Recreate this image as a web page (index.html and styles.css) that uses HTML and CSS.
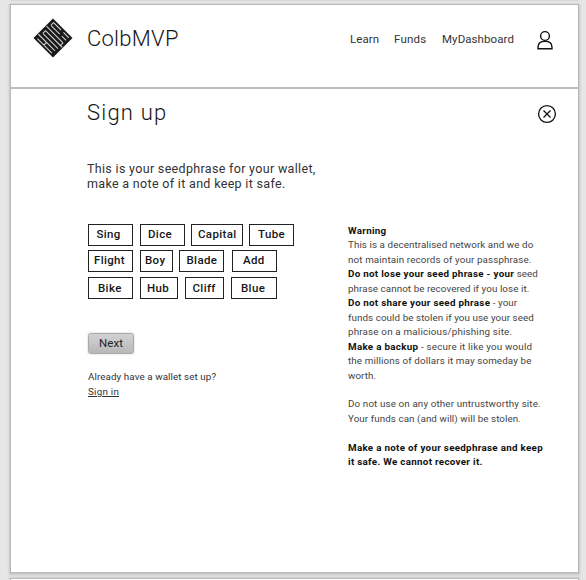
FILE: index.html
```html
<!DOCTYPE html>
<html lang="en">
<head>
<meta charset="utf-8">
<title>ColbMVP</title>
<link rel="stylesheet" href="styles.css">
</head>
<body>
<div class="previous"></div>
<div class="page">
  <header class="header">
    <svg class="logo" viewBox="0 0 40 40">
      <path d="M20 .5 39.5 20 20 39.5 .5 20Z" fill="#191919"/>
      <g transform="rotate(45 20 20)" fill="none" stroke="#cfcfcf" stroke-width="1.1">
        <path d="M9.5 8.7H20M23.5 8.7H31M9.5 12.5H22M25 12.5H31M7 16.3H30.5M9.5 20.1H33M9.5 23.9H31M7 27.7H30.5M9.5 31.5H30M9.5 8.7V12.5M30.5 16.3V20M9.5 20V23.9M18.5 27.7V31.5"/>
      </g>
    </svg>
    <div class="brand">ColbMVP</div>
    <nav class="nav">
      <a class="learn">Learn</a>
      <a class="funds">Funds</a>
      <a class="dash">MyDashboard</a>
    </nav>
    <svg class="user" viewBox="0 0 18 22" fill="none" stroke="#111" stroke-width="1.4">
      <circle cx="9" cy="6" r="4.4"/>
      <path d="M2 18.8V17.3C2 13.5 4.8 11.2 9 11.2S16 13.5 16 17.3V18.8Z"/>
    </svg>
  </header>
  <div class="title-row">
    <h1>Sign up</h1>
    <svg class="close" viewBox="0 0 20 20" fill="none" stroke="#111" stroke-width="1.3">
      <circle cx="10" cy="10" r="8.4"/>
      <path d="M6.5 6.5 13.5 13.5M13.5 6.5 6.5 13.5"/>
    </svg>
  </div>
  <main class="main">
    <section class="left">
      <p class="intro">This is your seedphrase for your wallet,<br>make a note of it and keep it safe.</p>
      <div class="words">
        <div class="word sing">Sing</div><div class="word dice">Dice</div><div class="word capital">Capital</div><div class="word tube">Tube</div>
      </div>
      <div class="words second">
        <div class="word flight">Flight</div><div class="word boy">Boy</div><div class="word blade">Blade</div><div class="word add">Add</div>
      </div>
      <div class="words">
        <div class="word bike">Bike</div><div class="word hub">Hub</div><div class="word cliff">Cliff</div><div class="word blue">Blue</div>
      </div>
      <button class="next">Next</button>
      <p class="already">Already have a wallet set up?<br><a class="signin">Sign in</a></p>
    </section>
    <aside class="warning">
      <div><b>Warning</b></div>
      <div>This is a decentralised network and we do</div>
      <div class="wide">not maintain records of your passphrase.</div>
      <div><b>Do not lose your seed phrase - your</b> seed</div>
      <div>phrase cannot be recovered if you lose it.</div>
      <div><b>Do not share your seed phrase</b> - your</div>
      <div>funds could be stolen if you use your seed</div>
      <div class="wider">phrase on a malicious/phishing site.</div>
      <div class="wider"><b>Make a backup</b> - secure it like you would</div>
      <div class="wide">the millions of dollars it may someday be</div>
      <div>worth.</div>
      <div class="gap wide">Do not use on any other untrustworthy site.</div>
      <div>Your funds can (and will) will be stolen.</div>
      <div class="gap"><b>Make a note of your seedphrase and keep</b></div>
      <div><b>it safe. We cannot recover it.</b></div>
    </aside>
  </main>
</div>
<div class="following"></div>
</body>
</html>
```
FILE: styles.css
```css
* { box-sizing: border-box; }
body { margin: 0; height: 580px; overflow: hidden; background: #e6e6e6; font-family: Roboto, "Liberation Sans", sans-serif; color: #161616; }
h1, p { margin: 0; font-weight: 300; }
.previous { height: 1px; margin: 0 8px 4px 11px; background: #d6d6d6; }
.page { width: 567px; height: 567px; margin-left: 11px; background: #fff; box-shadow: 0 0 0 1px #b8b8b8, 0 1px 2px 2px #c4c4c4; }
.following { height: 10px; width: 567px; margin: 7px 0 0 11px; background: #fff; box-shadow: 0 0 0 1px #bbb, 0 0 2px 2px #ccc; }
.header { height: 84px; display: flex; border-bottom: 2px solid #bcbcbc; }
.logo { width: 40px; height: 40px; margin: 13px 0 0 22px; }
.brand { width: 110px; margin: 21px 0 0 14px; font-size: 22px; line-height: 26px; font-weight: 300; letter-spacing: .25px; }
.nav { width: 180px; display: flex; margin: 27px 0 0 153px; font-size: 11.5px; line-height: 14px; color: #333; letter-spacing: .08px; }
.learn { width: 44px; }
.funds { width: 48px; letter-spacing: .2px; }
.user { width: 18px; height: 22px; margin: 25px 0 0 6px; }
.title-row { height: 50px; display: flex; justify-content: space-between; padding: 11px 21px 0 76px; }
h1 { font-size: 22px; line-height: 26px; letter-spacing: 1.2px; }
.close { width: 20px; height: 20px; margin-top: 4px; }
.main { display: flex; padding-left: 76px; white-space: nowrap; }
.left { width: 261px; padding-top: 22px; }
.intro { font-size: 12.5px; line-height: 15px; font-weight: 400; letter-spacing: .32px; color: #333; margin-bottom: 33px; }
.words { display: flex; margin: 0 0 4px 1px; height: 22px; }
.second { margin-bottom: 5px; }
.word { height: 22px; border: 1px solid #222; font-size: 11.5px; line-height: 19px; font-weight: 500; letter-spacing: .35px; width: 45px; }
.sing { padding-left: 7.5px; }
.dice { margin-left: 7px; padding-left: 7px; }
.capital { width: 52px; margin-left: 6px; padding-left: 6px; }
.tube { margin-left: 6px; padding-left: 8px; }
.flight { padding-left: 5px; }
.boy { width: 33px; margin-left: 7px; padding-left: 4px; }
.blade { margin-left: 6px; padding-left: 6.5px; }
.add { margin-left: 8px; padding-left: 10px; }
.bike { padding-left: 9px; }
.words .hub, .words .cliff, .words .blue, .words .bike { line-height: 20px; }
.hub { width: 38px; margin-left: 7px; padding-left: 6px; }
.cliff { width: 39px; margin-left: 7px; padding-left: 6.5px; }
.blue { width: 46px; margin-left: 7px; padding-left: 9px; }
.next { display: block; width: 46px; height: 21px; margin: 34px 0 0 1px; padding: 0; border: 1px solid #aaa; border-radius: 2.5px; background: linear-gradient(#d2d2d2, #b8b8b8); box-shadow: 0 0 1px 1px #eee; font: 11.5px/19px Roboto, sans-serif; letter-spacing: .1px; color: #222; }
.already { margin: 15px 0 0 1px; font-size: 9.8px; line-height: 15px; font-weight: 400; letter-spacing: .09px; color: #333; }
.signin { text-decoration: underline; letter-spacing: .25px; }
.warning { padding-top: 85px; font-size: 9.8px; line-height: 14.45px; color: #444; letter-spacing: .08px; }
.warning b { color: #111; font-weight: 700; letter-spacing: .3px; }
.warning .wide { letter-spacing: .13px; }
.warning .wider { letter-spacing: .19px; }
.gap { margin-top: 14.45px; }
```
